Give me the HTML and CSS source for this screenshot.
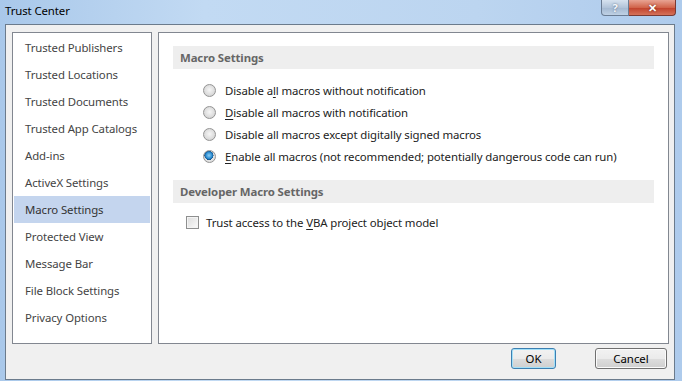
FILE: index.html
```html
<!DOCTYPE html>
<html lang="en">
<head>
    <meta charset="UTF-8">
    <title>Trust Center</title>
    <link rel="stylesheet" href="styles.css">
</head>
<body>
    <div class="window">
        <div class="titlebar">
            <span class="title">Trust Center</span>
            <div class="caption-buttons">
                <span class="cap-btn help">?</span>
                <span class="cap-btn close">&#x2715;</span>
            </div>
        </div>

        <div class="client">
            <div class="main">
                <!-- Category list -->
                <ul class="nav">
                    <li>Trusted Publishers</li>
                    <li>Trusted Locations</li>
                    <li>Trusted Documents</li>
                    <li>Trusted App Catalogs</li>
                    <li>Add-ins</li>
                    <li>ActiveX Settings</li>
                    <li class="selected">Macro Settings</li>
                    <li>Protected View</li>
                    <li>Message Bar</li>
                    <li>File Block Settings</li>
                    <li>Privacy Options</li>
                </ul>

                <!-- Settings panel -->
                <div class="panel">
                    <div class="section-head">Macro Settings</div>
                    <div class="options">
                        <label class="option"><span class="radio"></span><span>Disable a<u>l</u>l macros without notification</span></label>
                        <label class="option"><span class="radio"></span><span><u>D</u>isable all macros with notification</span></label>
                        <label class="option"><span class="radio"></span><span>Disable all macros except di<u>g</u>itally signed macros</span></label>
                        <label class="option"><span class="radio checked"></span><span><u>E</u>nable all macros (not recommended; potentially dangerous code can run)</span></label>
                    </div>

                    <div class="section-head dev">Developer Macro Settings</div>
                    <label class="check-row"><span class="checkbox"></span><span>Trust access to the <u>V</u>BA project object model</span></label>
                </div>
            </div>

            <div class="footer">
                <button class="btn default">OK</button>
                <button class="btn">Cancel</button>
            </div>
            <span class="grip"></span>
        </div>
    </div>
</body>
</html>
```

FILE: styles.css
```css
/* Basic Reset */
* {
    margin: 0;
    padding: 0;
    box-sizing: border-box;
}

body {
    font-family: "Noto Sans", "Open Sans", sans-serif;
    font-size: 11.4px;
    letter-spacing: -0.1px;
    background-color: #b9d1ea;
    width: 682px;
    height: 381px;
    overflow: hidden;
}

/* Window frame */
.window {
    width: 682px;
    height: 381px;
    display: flex;
    flex-direction: column;
    padding: 0 7px 1px 5px;
    background: linear-gradient(to right, #a9c8ea 0%, #c2daf3 30%, #bcd5f0 70%, #aecbec 100%);
}

.titlebar {
    height: 24px;
    display: flex;
    align-items: flex-start;
    justify-content: space-between;
}

.title {
    color: #000;
    line-height: 20px;
    padding-top: 1px;
}

.caption-buttons {
    display: flex;
    margin-right: -1px;
}

.cap-btn {
    height: 16px;
    display: flex;
    align-items: center;
    justify-content: center;
    color: #fff;
    font-size: 11px;
    font-weight: bold;
    border: 1px solid #6a7c93;
    border-top: none;
}

.help {
    width: 28px;
    border-radius: 0 0 0 4px;
    background: linear-gradient(#d6e2ef, #b2c4d9 50%, #a3b8d0 51%, #bfd1e5);
    color: #f4f7fb;
    text-shadow: 0 0 2px #52647b;
}

.close {
    width: 47px;
    border-left: none;
    border-color: #7a3a33;
    border-radius: 0 0 4px 0;
    background: linear-gradient(#e8a493, #d1644b 50%, #c0402a 51%, #d5725a);
    text-shadow: 0 0 2px #5b1a10;
}

/* Dialog body */
.client {
    position: relative;
    flex: 1;
    display: flex;
    flex-direction: column;
    background-color: #f0f0f0;
    border: 1px solid #6b7b8c;
    padding: 7px 5px 10px 6px;
}

.main {
    display: flex;
    gap: 6px;
    height: 312px;
}

.nav {
    list-style: none;
    width: 140px;
    background-color: #fff;
    border: 1px solid #828790;
    padding: 1px;
}

.nav li {
    height: 27px;
    line-height: 27px;
    padding-left: 11px;
    color: #444;
}

.nav li.selected {
    background-color: #c4d5ee;
    color: #333;
}

.panel {
    flex: 1;
    background-color: #fff;
    border: 1px solid #828790;
    padding: 13px 14px;
}

.section-head {
    height: 23px;
    line-height: 23px;
    padding-left: 7px;
    background-color: #eeeeee;
    color: #666;
    font-weight: bold;
}

.section-head.dev {
    margin-top: 13px;
}

.options {
    margin-top: 10px;
    padding-left: 30px;
}

.option,
.check-row {
    display: flex;
    align-items: center;
    height: 22px;
    color: #222;
}

.radio {
    width: 13px;
    height: 13px;
    border-radius: 50%;
    border: 1px solid #949494;
    background: radial-gradient(circle at 50% 45%, #f6f6f6 0%, #dcdcdc 60%, #c9c9c9 100%);
    margin-right: 9px;
}

.radio.checked {
    background:
        radial-gradient(circle at 45% 40%, #8fd0f5 0%, #2a8bd0 35%, #124f86 50%, transparent 52%),
        radial-gradient(circle, #f4f4f4 0%, #d4d4d4 100%);
}

.check-row {
    margin-top: 8px;
    padding-left: 13px;
}

.checkbox {
    width: 13px;
    height: 13px;
    border: 1px solid #8e8f8f;
    background: linear-gradient(135deg, #dcdcdc, #fbfbfb);
    box-shadow: inset 0 0 0 1px #f4f4f4;
    margin-right: 7px;
}

u {
    text-decoration: underline;
    text-underline-offset: 2px;
}

/* Buttons */
.footer {
    display: flex;
    justify-content: flex-end;
    gap: 39px;
    margin-top: 4px;
    padding-right: 2px;
}

.btn {
    font-family: inherit;
    font-size: 11.4px;
    color: #000;
    width: 72px;
    height: 21px;
    border: 1px solid #707070;
    border-radius: 3px;
    background: linear-gradient(#f2f2f2, #ebebeb 50%, #dddddd 51%, #cfcfcf);
    box-shadow: inset 0 0 0 1px #fbfbfb;
}

.btn.default {
    width: 45px;
    border-color: #3c7fb1;
    box-shadow: inset 0 0 0 1px #a3e0f8;
}

/* Resize grip */
.grip {
    position: absolute;
    right: 1px;
    bottom: 1px;
    width: 6px;
    height: 6px;
    background-image: radial-gradient(circle, #a8b5c4 40%, transparent 45%);
    background-size: 2px 2px;
}
```
